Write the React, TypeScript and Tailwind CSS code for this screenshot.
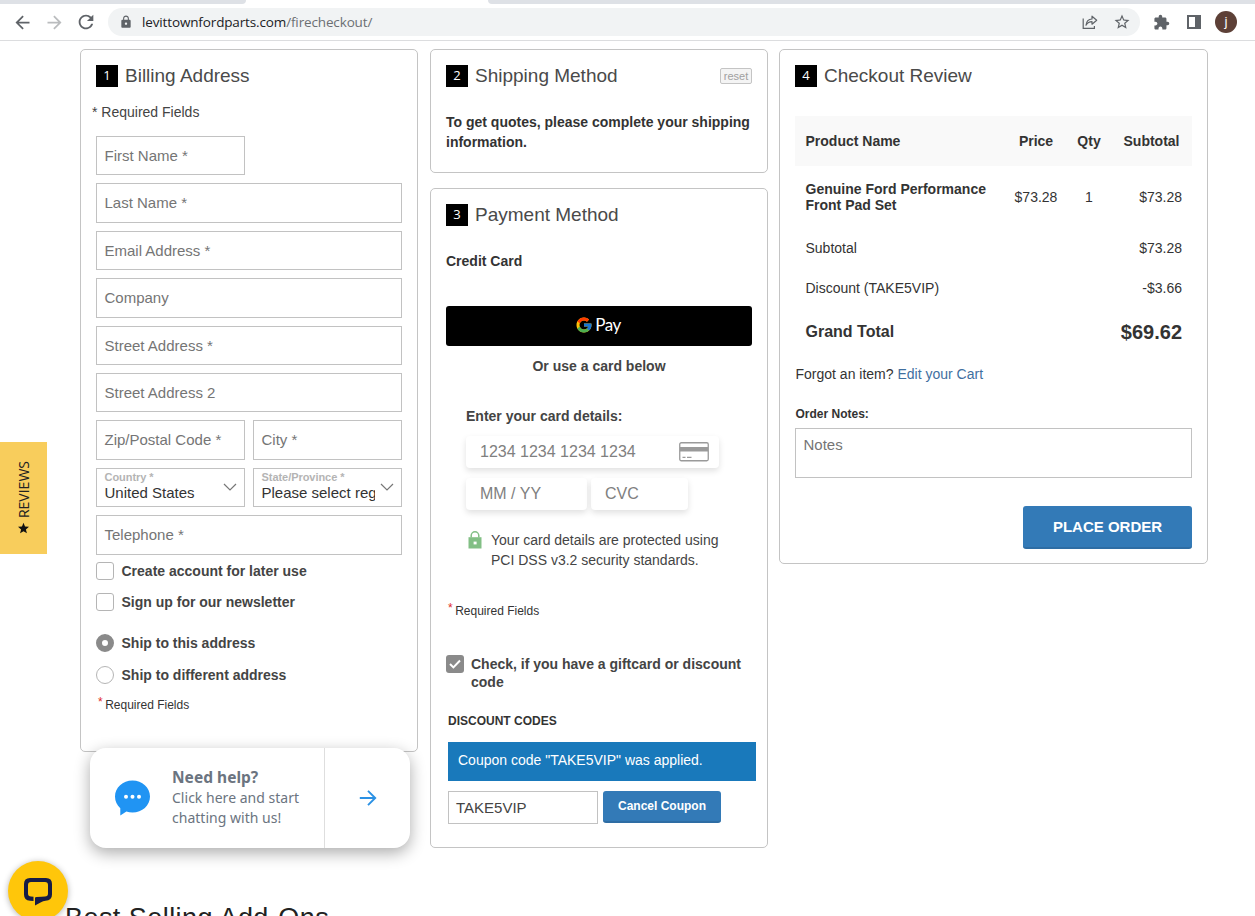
import type { ReactNode } from "react";
import { FcGoogle } from "react-icons/fc";
import { MdArrowBack, MdArrowForward, MdExtension, MdLock, MdRefresh, MdStarBorder } from "react-icons/md";

const TOTALS = [
  { label: "Subtotal", value: "$73.28" },
  { label: "Discount (TAKE5VIP)", value: "-$3.66" },
];

function ShareIcon() {
  return (
    <svg width="16" height="16" viewBox="0 0 16 16" fill="none" stroke="#5f6368" strokeWidth="1.2">
      <path d="M1.2 4.5V14.4H12.4V12" />
      <path d="M4 11.2C4.4 7.4 6.6 5.2 10 5V2.2L14.7 6.2L10 10.2V7.6C7.4 7.6 5.4 8.8 4 11.2Z" strokeLinejoin="round" />
    </svg>
  );
}

function SidePanelIcon() {
  return (
    <svg width="14" height="14" viewBox="0 0 14 14">
      <path d="M0 0H14V14H0ZM2 2V12H8V2Z" fill="#5f6368" fillRule="evenodd" />
    </svg>
  );
}

function CardIcon() {
  return (
    <svg width="30" height="20" viewBox="0 0 30 20" fill="none">
      <rect x="0.75" y="0.75" width="28.5" height="18" rx="1.5" stroke="#9a9a9a" strokeWidth="1.3" />
      <path d="M1 5H29V9.5H1Z" fill="#9a9a9a" />
      <path d="M3.5 15.3H6.5M8 15.3H12.5" stroke="#9a9a9a" strokeWidth="1.3" />
    </svg>
  );
}

function PadlockIcon() {
  return (
    <svg width="14" height="18" viewBox="0 0 14 18" fill="none" className="mt-px">
      <path d="M3.2 6.5V4.6a3.8 3.8 0 0 1 7.6 0v1.9" stroke="#82bf85" strokeWidth="1.5" />
      <path d="M.5 6.2H13.5V17.5H.5Z" fill="#82bf85" />
      <path d="M5.6 10.6H8.6V13.4H5.6Z" fill="#fff" />
    </svg>
  );
}

function ChevronDown() {
  return (
    <svg width="14" height="9" viewBox="0 0 14 9" fill="none" stroke="#777" strokeWidth="1.2" className="shrink-0">
      <path d="M1 1l6 6 6-6" />
    </svg>
  );
}

function BrowserBar() {
  return (
    <header>
      <div className="flex h-1 justify-between bg-white">
        <div className="w-[246px] rounded-br bg-[#dee1e6]" />
        <div className="w-[767px] rounded-bl bg-[#dee1e6]" />
      </div>
      <div className="flex h-[37px] items-center border-b border-[#dcdddf] pl-3 text-[#5f6368]">
        <MdArrowBack className="size-[21px] shrink-0" />
        <MdArrowForward className="ml-[11px] size-[21px] shrink-0 text-[#babcbe]" />
        <MdRefresh className="ml-[10px] size-[22px] shrink-0" />
        <div className="ml-[11px] flex h-7 w-[1032px] shrink-0 items-center rounded-full bg-[#f1f3f4] pr-[9px] pl-[11px]">
          <MdLock className="size-[14px]" />
          <span className="ml-[9px] font-['Open_Sans',sans-serif] text-[13.5px] tracking-[-0.14px] text-[#202124]">
            levittownfordparts.com<span className="text-[#6b6f73]">/firecheckout/</span>
          </span>
          <div className="ml-auto flex items-center gap-[15px]">
            <ShareIcon />
            <MdStarBorder className="size-[18px]" />
          </div>
        </div>
        <MdExtension className="ml-[13px] size-[17px] shrink-0" />
        <div className="ml-[17px]">
          <SidePanelIcon />
        </div>
        <div className="ml-[14px] flex size-[22px] items-center justify-center rounded-full bg-[#5d4037] font-['Roboto',sans-serif] text-[13px] text-white">
          j
        </div>
      </div>
    </header>
  );
}

function StepHeader({ step, title, children }: { step: number; title: string; children?: ReactNode }) {
  return (
    <div className="flex h-[22px] items-center">
      <div className="flex size-[22px] items-center justify-center bg-black font-['Open_Sans',sans-serif] text-[13px] text-white">
        {step}
      </div>
      <h2 className="ml-[7px] text-[19px] leading-[22px] text-[#4a4a4a]">{title}</h2>
      {children}
    </div>
  );
}

function Field({ label }: { label: string }) {
  return (
    <div className="flex h-[39.4px] flex-1 items-center border border-[#c2c2c2] pt-[1.2px] pl-[7.5px] text-[15px] text-[#757575]">
      {label}
    </div>
  );
}

function SelectField({ label, value }: { label: string; value: string }) {
  return (
    <div className="flex h-[39.4px] w-[149px] items-center border border-[#c2c2c2] pr-[7px] pl-[7.5px]">
      <div className="min-w-0 flex-1 pb-[2px]">
        <div className="text-[11px] leading-[13px] font-bold tracking-[-0.05px] text-[#b4b4b4]">{label}</div>
        <div className="w-[113px] overflow-hidden text-[15px] leading-[17px] whitespace-nowrap text-[#333]">{value}</div>
      </div>
      <ChevronDown />
    </div>
  );
}

function RequiredNote() {
  return (
    <p className="flex text-[12px] leading-[16px] text-[#333]">
      <span className="mr-[2.5px] -mt-[3px] text-[#e02b27]">*</span>
      Required Fields
    </p>
  );
}

function BillingAddress() {
  return (
    <section className="h-[703px] w-[338px] rounded-[5px] border border-[#c4c4c4] p-[15px]">
      <StepHeader step={1} title="Billing Address" />
      <p className="mt-[15px] -ml-1 text-[14px] leading-5 text-[#444]">* Required Fields</p>

      <div className="mt-[14px] flex w-[306px] flex-col gap-2">
        <div className="flex w-[149px]">
          <Field label="First Name *" />
        </div>
        <div className="flex"><Field label="Last Name *" /></div>
        <div className="flex"><Field label="Email Address *" /></div>
        <div className="flex"><Field label="Company" /></div>
        <div className="flex"><Field label="Street Address *" /></div>
        <div className="flex"><Field label="Street Address 2" /></div>
        <div className="flex gap-2">
          <Field label="Zip/Postal Code *" />
          <Field label="City *" />
        </div>
        <div className="flex gap-2">
          <SelectField label="Country *" value="United States" />
          <SelectField label="State/Province *" value="Please select region" />
        </div>
        <div className="flex"><Field label="Telephone *" /></div>
      </div>

      <div className="mt-[7.4px] text-[14px] leading-5 font-bold text-[#444]">
        <div className="flex h-[18px] items-center gap-[7.5px]">
          <span className="size-[18px] rounded-[3px] border border-[#b5b5b5]" />
          <span className="pt-px">Create account for later use</span>
        </div>
        <div className="mt-[13px] flex h-[18px] items-center gap-[7.5px]">
          <span className="size-[18px] rounded-[3px] border border-[#b5b5b5]" />
          <span className="pt-px">Sign up for our newsletter</span>
        </div>
        <div className="mt-[23px] flex h-[18px] items-center gap-[7.5px]">
          <span className="size-[18px] rounded-full border-[6px] border-[#8a8a8a]" />
          <span className="pt-px">Ship to this address</span>
        </div>
        <div className="mt-[14px] flex h-[18px] items-center gap-[7.5px]">
          <span className="size-[18px] rounded-full border border-[#b5b5b5]" />
          <span className="pt-px">Ship to different address</span>
        </div>
      </div>
      <div className="mt-[13px] ml-[2px]">
        <RequiredNote />
      </div>
    </section>
  );
}

function ShippingMethod() {
  return (
    <section className="h-[124px] rounded-[5px] border border-[#c4c4c4] p-[15px]">
      <StepHeader step={2} title="Shipping Method">
        <button className="ml-auto h-4 w-8 rounded-[2px] border border-[#c4c4c4] bg-[#f4f4f4] text-[11px] leading-[14px] text-[#a0a0a0]">
          reset
        </button>
      </StepHeader>
      <p className="mt-[25px] text-[14px] leading-5 font-bold whitespace-nowrap text-[#333]">
        To get quotes, please complete your shipping
        <br />
        information.
      </p>
    </section>
  );
}

function PaymentMethod() {
  return (
    <section className="h-[660px] rounded-[5px] border border-[#c4c4c4] p-[15px]">
      <StepHeader step={3} title="Payment Method" />
      <h3 className="mt-[25px] text-[14px] leading-5 font-bold text-[#333]">Credit Card</h3>

      <button className="mt-[35px] flex h-10 w-full items-center justify-center gap-[2px] rounded-[3px] bg-black pr-[2px] pb-[2px] font-['Lato',sans-serif] text-[17px] text-white">
        <FcGoogle className="size-[18px]" />
        <span className="tracking-[-0.4px]">Pay</span>
      </button>
      <p className="mt-[10px] text-center text-[14px] leading-5 font-bold text-[#444]">Or use a card below</p>

      <div className="mt-[30px] ml-5">
        <p className="text-[14px] leading-5 font-bold text-[#444]">Enter your card details:</p>
        <div className="mt-[10px] flex h-8 w-[253px] items-center justify-between rounded-[4px] pr-[10px] pl-[14px] text-[16px] text-[#808080] shadow-[0_3px_6px_rgba(0,0,0,0.12)]">
          1234 1234 1234 1234
          <CardIcon />
        </div>
        <div className="mt-[10px] flex gap-1 text-[16px] text-[#808080]">
          <div className="flex h-8 w-[121px] items-center rounded-[4px] pl-[14px] shadow-[0_3px_6px_rgba(0,0,0,0.12)]">MM / YY</div>
          <div className="flex h-8 w-[97px] items-center rounded-[4px] pl-[14px] shadow-[0_3px_6px_rgba(0,0,0,0.12)]">CVC</div>
        </div>
        <div className="mt-5 ml-[2px] flex gap-[9px]">
          <PadlockIcon />
          <p className="text-[14px] leading-5 whitespace-nowrap text-[#444]">
            Your card details are protected using
            <br />
            PCI DSS v3.2 security standards.
          </p>
        </div>
      </div>

      <div className="mt-[33px] ml-[2px]">
        <RequiredNote />
      </div>

      <div className="mt-[36px] flex gap-[7px]">
        <span className="flex size-[18px] shrink-0 items-center justify-center rounded-[3px] bg-[#8a8a8a]">
          <svg width="12" height="10" viewBox="0 0 12 10" fill="none" stroke="#fff" strokeWidth="2">
            <path d="M1 5l3.4 3.4L11 1.5" />
          </svg>
        </span>
        <p className="text-[14px] leading-[18px] font-bold whitespace-nowrap text-[#444]">
          Check, if you have a giftcard or discount
          <br />
          code
        </p>
      </div>

      <div className="mt-[22px] ml-[2px]">
        <h3 className="text-[12px] leading-4 font-bold text-[#333]">DISCOUNT CODES</h3>
        <div className="mt-[13px] h-[39px] w-[308px] bg-[#1979bb] pl-[10px] text-[14px] leading-[37px] text-white">
          Coupon code "TAKE5VIP" was applied.
        </div>
        <div className="mt-[10px] flex gap-[5px]">
          <div className="flex h-[33px] w-[150px] items-center border border-[#c2c2c2] pt-px pl-[7px] text-[15px] text-[#444]">TAKE5VIP</div>
          <button className="h-8 w-[118px] rounded-[3px] border-b-2 border-[#2e6da4] bg-[#337ab7] text-[12px] font-bold text-white">
            Cancel Coupon
          </button>
        </div>
      </div>
    </section>
  );
}

function CheckoutReview() {
  return (
    <section className="h-[515px] w-[429px] rounded-[5px] border border-[#c4c4c4] p-[15px] text-[14px] text-[#333]">
      <StepHeader step={4} title="Checkout Review" />

      <div className="mt-[29px] grid h-[50px] grid-cols-[210px_62px_44px_81px] items-center bg-[#f9f9f9] font-bold">
        <span className="pl-[10.5px]">Product Name</span>
        <span className="text-center">Price</span>
        <span className="text-center">Qty</span>
        <span className="text-center">Subtotal</span>
      </div>
      <div className="grid h-[62px] grid-cols-[210px_62px_44px_81px] items-center">
        <span className="pl-[10.5px] leading-4 font-bold whitespace-nowrap">
          Genuine Ford Performance
          <br />
          Front Pad Set
        </span>
        <span className="text-center">$73.28</span>
        <span className="text-center">1</span>
        <span className="pr-[10px] text-right">$73.28</span>
      </div>
      {TOTALS.map((row) => (
        <div key={row.label} className="flex h-10 items-center justify-between pr-[10px] pl-[10.5px]">
          <span>{row.label}</span>
          <span>{row.value}</span>
        </div>
      ))}
      <div className="flex h-[47px] items-center justify-between pr-[10px] pl-[10.5px] font-bold">
        <span className="text-[16px]">Grand Total</span>
        <span className="text-[20px]">$69.62</span>
      </div>

      <p className="mt-[9px] pl-[0.5px] leading-5">
        Forgot an item? <a className="text-[#3f6f9f]">Edit your Cart</a>
      </p>
      <p className="mt-[22px] pl-[0.5px] text-[12px] leading-4 font-bold">Order Notes:</p>
      <div className="mt-[6px] h-[50px] border border-[#c2c2c2] pt-[7px] pl-[7.5px] text-[15px] leading-[18px] text-[#757575]">
        Notes
      </div>
      <button className="mt-7 ml-auto block h-[43px] w-[169px] rounded-[3px] border-b-2 border-[#2e6da4] bg-[#337ab7] pt-px text-[15px] font-bold text-white">
        PLACE ORDER
      </button>
    </section>
  );
}

function ReviewsTab() {
  return (
    <div className="absolute top-[442px] left-0 flex h-[111.5px] w-[47px] items-center justify-center bg-[#f8cd5c]">
      <div className="flex rotate-180 items-center gap-[4px] text-[14px] text-[#222] [writing-mode:vertical-rl]">
        <svg width="11" height="12" viewBox="0 0 24 24" className="rotate-180" fill="#111">
          <path d="M12 .6l3.3 8.2 8.7.5-6.8 5.6 2.3 8.5L12 18.7l-7.5 4.700 2.300-8.500L0 9.300l8.700-.5z" />
        </svg>
        <span className="font-['Open_Sans',sans-serif] leading-5">REVIEWS</span>
      </div>
    </div>
  );
}

function ChatPrompt() {
  return (
    <div className="absolute top-[748px] left-[90px] flex h-[100px] w-[320px] rounded-[16px] bg-white shadow-[0_5px_16px_rgba(0,0,0,0.33)]">
      <div className="flex w-[235px] items-center border-r border-[#dedede] pl-[25px]">
        <svg width="35" height="36" viewBox="0 0 35 36" className="-mt-px">
          <path d="M17.5.5C27.2.5 35 7.500 35 16.500S27.200 32.500 17.500 32.500C15.300 32.500 13.300 32.200 11.400 31.500L5.300 35.400V28.200C2 25.300 0 21.200 0 16.500 0 7.500 7.800.5 17.500.5Z" fill="#2094f3" />
          <circle cx="11" cy="16.8" r="2" fill="#fff" />
          <circle cx="17.5" cy="16.8" r="2" fill="#fff" />
          <circle cx="24" cy="16.8" r="2" fill="#fff" />
        </svg>
        <div className="-mt-[2px] ml-[22px] font-['Noto_Sans',sans-serif] text-[14px] leading-5 tracking-[0.02px] whitespace-nowrap text-[#6b7480]">
          <p className="text-[15.5px] leading-[21px] font-bold">Need help?</p>
          <p>Click here and start</p>
          <p>chatting with us!</p>
        </div>
      </div>
      <div className="flex flex-1 items-center justify-center">
        <svg width="18" height="16" viewBox="0 0 18 16" fill="none" stroke="#2b91e4" strokeWidth="1.9">
          <path d="M.8 8H16M9 .9L16.2 8L9 15.1" />
        </svg>
      </div>
    </div>
  );
}

function ChatLauncher() {
  return (
    <button className="absolute top-[861px] left-2 flex size-[60px] items-center justify-center rounded-full bg-[#ffc60a] shadow-[0_1px_6px_rgba(0,0,0,0.3)]">
      <svg width="30" height="30" viewBox="0 0 30 30" fill="none">
        <path
          d="M7 2H23Q29 2 29 8V18.500Q29 24.600 22.500 24.800Q20 25 18 26.200L12 29.500V21.500Q14.500 20.800 22 20.600Q25 20.500 25 17.500V9Q25 6 22 6H8Q5 6 5 9V17.500Q5 20.500 8 20.600L10.500 20.800V24.900L7 24.700Q1 24.300 1 18.500V8Q1 2 7 2Z"
          fill="#161c46"
        />
      </svg>
    </button>
  );
}

export default function App() {
  return (
    <div className="relative h-[916px] w-[1255px] overflow-hidden bg-white font-['Liberation_Sans',Arial,sans-serif]">
      <BrowserBar />
      <main className="pt-2 pl-20">
        <div className="flex items-start">
          <BillingAddress />
          <div className="ml-3 flex w-[338px] flex-col gap-[15px]">
            <ShippingMethod />
            <PaymentMethod />
          </div>
          <div className="ml-[11px]">
            <CheckoutReview />
          </div>
        </div>
        <h2 className="mt-[54px] -ml-[15px] text-[27px] leading-[32px] tracking-[0.45px] whitespace-nowrap text-[#222]">
          Best Selling Add-Ons
        </h2>
      </main>
      <ReviewsTab />
      <ChatPrompt />
      <ChatLauncher />
    </div>
  );
}
